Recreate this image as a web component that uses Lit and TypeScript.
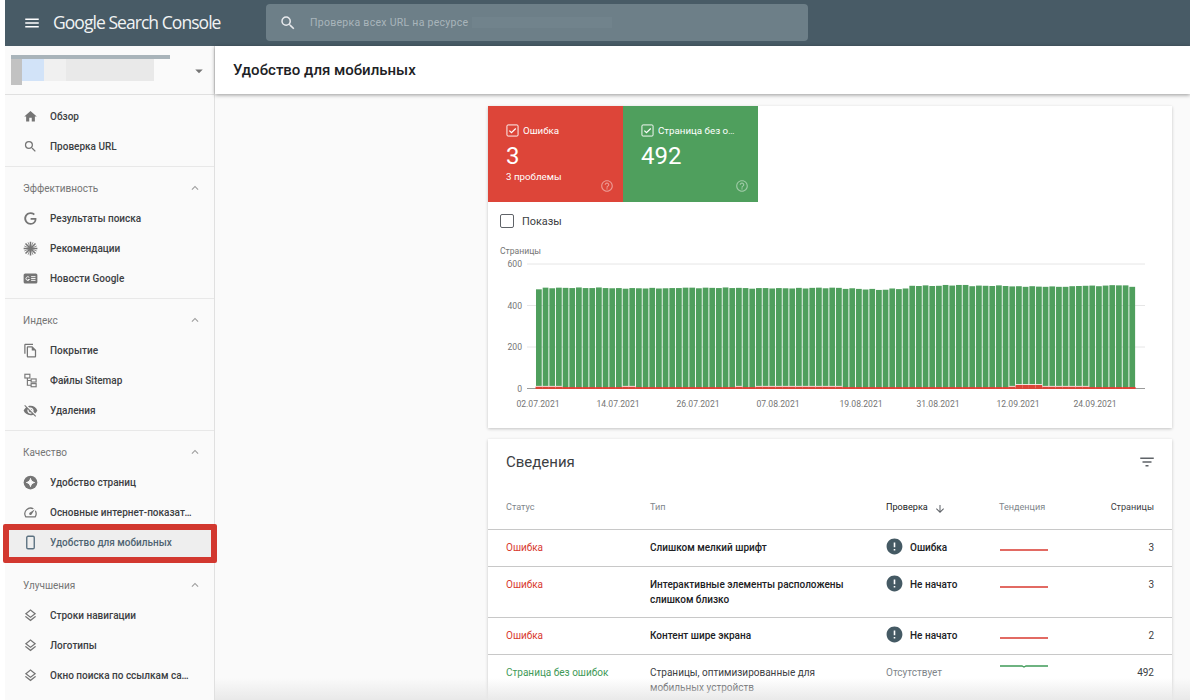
import { LitElement, html, css, svg } from "lit";
import { customElement } from "lit/decorators.js";

const P = {
  menu: "M3 18h18v-2H3v2zm0-5h18v-2H3v2zm0-7v2h18V6H3z",
  search: "M15.5 14h-.79l-.28-.27A6.471 6.471 0 0 0 16 9.5 6.5 6.5 0 1 0 9.5 16c1.61 0 3.09-.59 4.23-1.57l.27.28v.79l5 4.99L20.49 19l-4.99-5zm-6 0C7.01 14 5 11.99 5 9.5S7.01 5 9.5 5 14 7.01 14 9.5 11.99 14 9.5 14z",
  home: "M10 20v-6h4v6h5v-8h3L12 3 2 12h3v8z",
  google: "M21.35 11.1h-9.17v2.73h6.51c-.33 3.81-3.5 5.44-6.5 5.44C8.36 19.27 5 16.25 5 12c0-4.1 3.2-7.27 7.2-7.27 3.09 0 4.9 1.97 4.9 1.97L19 4.72S16.56 2 12.1 2C6.42 2 2.03 6.8 2.03 12c0 5.05 4.13 10 10.22 10 5.35 0 9.25-3.67 9.25-9.09 0-1.15-.15-1.81-.15-1.81z",
  pages: "M16 1H4c-1.1 0-2 .9-2 2v14h2V3h12V1zm-1 4H8c-1.1 0-1.99.9-1.99 2L6 21c0 1.1.89 2 1.99 2H19c1.1 0 2-.9 2-2V11l-6-6zM8 21V7h6v5h5v9H8z",
  eyeOff: "M12 7c2.76 0 5 2.24 5 5 0 .65-.13 1.26-.36 1.83l2.92 2.92c1.51-1.26 2.7-2.89 3.43-4.75-1.73-4.39-6-7.5-11-7.5-1.4 0-2.74.25-3.98.7l2.16 2.16C10.74 7.13 11.35 7 12 7zM2 4.27l2.28 2.28.46.46C3.08 8.3 1.78 10.02 1 12c1.73 4.39 6 7.5 11 7.5 1.55 0 3.03-.3 4.38-.84l.42.42L19.73 22 21 20.73 3.27 3 2 4.27zM7.53 9.8l1.55 1.55c-.05.21-.08.43-.08.65 0 1.66 1.34 3 3 3 .22 0 .44-.03.65-.08l1.55 1.55c-.67.33-1.41.53-2.2.53-2.76 0-5-2.24-5-5 0-.79.2-1.53.53-2.2zm4.31-.78l3.15 3.15.02-.16c0-1.66-1.34-3-3-3l-.17.01z",
  speed: "M20.38 8.57l-1.23 1.85a8 8 0 0 1-.22 7.58H5.07A8 8 0 0 1 15.58 6.85l1.85-1.23A10 10 0 0 0 3.35 19a2 2 0 0 0 1.72 1h13.85a2 2 0 0 0 1.74-1 10 10 0 0 0-.27-10.44zm-9.79 6.84a2 2 0 0 0 2.83 0l5.66-8.49-8.49 5.66a2 2 0 0 0 0 2.83z",
  layers: "M11.99 18.54l-7.37-5.73L3 14.07l9 7 9-7-1.63-1.27-7.38 5.74zM12 16l7.36-5.73L21 9l-9-7-9 7 1.63 1.27L12 16zm0-11.47L17.74 9 12 13.47 6.26 9 12 4.53z",
  less: "M12 8l-6 6 1.41 1.41L12 10.83l4.59 4.58L18 14z",
  filter: "M10 18h4v-2h-4v2zM3 6v2h18V6H3zm3 7h12v-2H6v2z",
  down: "M20 12l-1.41-1.41L13 16.17V4h-2v12.17l-5.58-5.59L4 12l8 8 8-8z",
  help: "M11 18h2v-2h-2v2zm1-16C6.48 2 2 6.48 2 12s4.48 10 10 10 10-4.48 10-10S17.52 2 12 2zm0 18c-4.41 0-8-3.59-8-8s3.59-8 8-8 8 3.59 8 8-3.59 8-8 8zm0-14c-2.21 0-4 1.79-4 4h2c0-1.1.9-2 2-2s2 .9 2 2c0 2-3 1.75-3 5h2c0-2.25 3-2.5 3-5 0-2.21-1.79-4-4-4z",
  error: "M12 2C6.48 2 2 6.48 2 12s4.48 10 10 10 10-4.48 10-10S17.52 2 12 2zm1 15h-2v-2h2v2zm0-4h-2V7h2v6z",
  drop: "M7 10l5 5 5-5z",
};

const ic = (d: string, cls = "ic") =>
  html`<svg class=${cls} viewBox="0 0 24 24" aria-hidden="true"><path d=${d}></path></svg>`;

const sparkIcon = html`<svg class="ic" viewBox="0 0 24 24" aria-hidden="true">
  <g stroke="currentColor" stroke-width="2.4" fill="none">
    <path d="M12 1v22M1 12h22M4 4l16 16M20 4L4 20"></path>
    <path d="M8 2l8 20M16 2L8 22M2 8l20 8M2 16l20-8" stroke-width="1.2"></path>
  </g></svg>`;
const newsIcon = html`<svg class="ic" viewBox="0 0 24 24" aria-hidden="true">
  <rect x="1" y="4" width="22" height="16" rx="2.5" fill="currentColor"></rect>
  <path d="M10 10.2a3 3 0 1 0 .4 3.4H7.6" stroke="#fafafa" stroke-width="1.5" fill="none"></path>
  <path d="M13 9h7M13 12h7M13 15h7" stroke="#fafafa" stroke-width="1.5"></path></svg>`;
const treeIcon = html`<svg class="ic" viewBox="0 0 24 24" aria-hidden="true">
  <g stroke="currentColor" stroke-width="1.8" fill="none">
    <rect x="3" y="2" width="8" height="6"></rect>
    <rect x="13" y="9.5" width="8" height="5"></rect>
    <rect x="13" y="17" width="8" height="5"></rect>
    <path d="M7 8v11.5h6M7 12h6"></path>
  </g></svg>`;
const expIcon = html`<svg class="ic" viewBox="0 0 24 24" aria-hidden="true">
  <circle cx="12" cy="12" r="11" fill="currentColor"></circle>
  <path d="M12 5.5c.6 3.6 2.9 5.9 6.5 6.5-3.6.6-5.9 2.9-6.5 6.5-.6-3.6-2.9-5.9-6.5-6.5 3.6-.6 5.9-2.9 6.5-6.5z" fill="#fafafa" stroke="#fafafa" stroke-width="1.6"></path></svg>`;
const phoneIcon = html`<svg class="ic phone" viewBox="0 0 24 24" aria-hidden="true">
  <rect x="6" y="2" width="12" height="20" rx="2" fill="none" stroke="currentColor" stroke-width="2.2"></rect></svg>`;

type Item = { icon: unknown; label: string; active?: boolean };
type Section = { title?: string; items: Item[]; extra?: boolean };

const sections: Section[] = [
  { items: [
    { icon: ic(P.home), label: "Обзор" },
    { icon: ic(P.search), label: "Проверка URL" },
  ] },
  { title: "Эффективность", items: [
    { icon: ic(P.google), label: "Результаты поиска" },
    { icon: sparkIcon, label: "Рекомендации" },
    { icon: newsIcon, label: "Новости Google" },
  ] },
  { title: "Индекс", items: [
    { icon: ic(P.pages), label: "Покрытие" },
    { icon: treeIcon, label: "Файлы Sitemap" },
    { icon: ic(P.eyeOff), label: "Удаления" },
  ] },
  { title: "Качество", items: [
    { icon: expIcon, label: "Удобство страниц" },
    { icon: ic(P.speed), label: "Основные интернет-показатели" },
    { icon: phoneIcon, label: "Удобство для мобильных", active: true },
  ] },
  { title: "Улучшения", extra: true, items: [
    { icon: ic(P.layers), label: "Строки навигации" },
    { icon: ic(P.layers), label: "Логотипы" },
    { icon: ic(P.layers), label: "Окно поиска по ссылкам сайта" },
  ] },
];

const rows = [
  { status: "Ошибка", ok: false, type: "Слишком мелкий шрифт", check: "Ошибка", count: "3" },
  { status: "Ошибка", ok: false, type: "Интерактивные элементы расположены слишком близко", check: "Не начато", count: "3", tall: true },
  { status: "Ошибка", ok: false, type: "Контент шире экрана", check: "Не начато", count: "2" },
  { status: "Страница без ошибок", ok: true, type: "Страницы, оптимизированные для мобильных устройств", check: "Отсутствует", count: "492", tall: true },
];

function totals(): number[] {
  const seg: [number, number][] = [
    [1, 478], [11, 485], [21, 483], [31, 485], [41, 483], [46, 485], [49, 481], [51, 478],
    [53, 476], [56, 481], [61, 495], [65, 498], [71, 495], [75, 492], [81, 491], [86, 495], [88, 498], [89, 495], [90, 491],
  ];
  const out: number[] = [];
  let s = 0;
  for (let i = 0; i < 90; i++) {
    while (i >= seg[s][0]) s++;
    out.push(seg[s][1] + Math.round(Math.sin(i * 2.3) * 1.6));
  }
  return out;
}

const raised = new Set([0, 1, 2, 3, 13, 14, 30, 33, 34, 35, 36, 37, 38, 39, 40, 41, 42, 43, 44, 45, 71, 76, 77, 78, 79, 80, 81, 82]);
const high = new Set([72, 73, 74, 75]);

const chart = () => {
  const x0 = 536, step = 6.667, base = 388.5, k = 124.5 / 600;
  const grid = [600, 400, 200];
  const dates = ["02.07.2021", "14.07.2021", "26.07.2021", "07.08.2021", "19.08.2021", "31.08.2021", "12.09.2021", "24.09.2021"];
  const dateX = [538, 618, 698, 778, 861, 938, 1018, 1095];
  return svg`<svg class="chart" viewBox="488 244 684 172" aria-label="Страницы">
    <text x="500" y="254" class="axis">Страницы</text>
    ${grid.map((v) => svg`
      <line x1="527" x2="1145" y1=${base - v * k} y2=${base - v * k} stroke="#e6e6e6" stroke-width="1"></line>
      <text x="522" y=${base - v * k + 3.2} class="axis" text-anchor="end">${v}</text>`)}
    <text x="522" y=${base + 3} class="axis" text-anchor="end">0</text>
    <line x1="527" x2="1145" y1=${base} y2=${base} stroke="#9a9a9a" stroke-width="1"></line>
    ${totals().map((t, i) => {
      const x = x0 + i * step;
      const red = high.has(i) ? 3.6 : raised.has(i) ? 1.8 : 1.5;
      const gap = high.has(i) || raised.has(i) ? 0.8 : 0;
      const top = base - t * k;
      return svg`
        <rect x=${x} y=${top} width="5.75" height=${base - red - gap - top} fill="#4f9f5d"></rect>
        <rect x=${x - 0.46} y=${base - red} width="6.67" height=${red + 0.5} fill="#dc4437"></rect>`;
    })}
    ${dates.map((d, i) => svg`<text x=${dateX[i]} y="407" class="axis" text-anchor="middle">${d}</text>`)}
  </svg>`;
};

const checkIcon = html`<svg class="tick" viewBox="0 0 14 14" aria-hidden="true">
  <rect x="1" y="1" width="12" height="12" rx="1.2" fill="none" stroke="#fff" stroke-width="1"></rect>
  <path d="M3.6 7.2l2.3 2.2 4.6-4.6" fill="none" stroke="#fff" stroke-width="1.3"></path></svg>`;

@customElement("app-root")
export class AppRoot extends LitElement {
  static styles = css`
    :host {
      display: block; position: relative; width: 1190px; height: 700px; overflow: hidden;
      background: #fff; font-family: Roboto, "Liberation Sans", sans-serif; color: #202124;
    }
    svg.ic { display: block; width: 15px; height: 15px; fill: currentColor; flex: none; }
    .shell { margin-left: 5px; height: 700px; display: flex; flex-direction: column; }
    header { height: 46px; flex: none; background: #485b66; display: flex; align-items: center; color: #fff; }
    .burger { padding: 0 0 0 18px; width: 30px; }
    .burger svg.ic { width: 18px; height: 18px; }
    .logo { font-family: "Open Sans", sans-serif; font-size: 17.5px; letter-spacing: -0.95px; width: 213px; color: #f1f3f4; white-space: nowrap; padding-bottom: 2px; }
    .searchbox { width: 542px; height: 37px; margin-top: -1px; background: #6d7f88; border-radius: 4px; display: flex; align-items: center; }
    .searchbox svg.ic { width: 18px; height: 18px; margin-left: 13px; color: #e8eaed; }
    .searchbox .ph { margin-left: 13px; font-size: 10.5px; color: #a9b5bb; letter-spacing: 0.28px; }
    .searchbox .blur { margin-left: 4px; width: 140px; height: 11px; background: #71838c; }
    .body { flex: 1; min-height: 0; display: flex; }
    aside { width: 209px; flex: none; background: #fafafa; border-right: 1px solid #e0e0e0; overflow: hidden; }
    .prop { height: 48px; border-bottom: 1px solid #e0e0e0; display: flex; align-items: center; justify-content: space-between; padding: 0 6px; box-sizing: content-box; }
    .prop .mask { display: block; width: 160px; height: 32px; margin-top: 2px; }
    .prop svg.ic { width: 18px; height: 18px; color: #757575; margin-top: 2px; }
    .sec { padding: 6px 0 5px; border-bottom: 1px solid #e8e8e8; }
    .sec.extra { padding-top: 7px; border-bottom: 0; }
    .sec.tail { padding: 0; border: 0; }
    .sec-h { height: 30px; display: flex; align-items: center; justify-content: space-between; padding: 0 12px 0 18px; font-size: 10px; color: #757575; }
    .sec-h svg.ic { color: #9e9e9e; width: 14px; height: 14px; }
    .item { height: 30px; display: flex; align-items: center; padding-left: 18px; color: #757575; font-size: 10px; font-weight: 500; }
    .item .lbl { margin-left: 12px; width: 143px; color: #3c4043; white-space: nowrap; overflow: hidden; text-overflow: ellipsis; line-height: 15px; }
    .item.active { background: #eeeeee; color: #5b7180; }
    .item.active .lbl { color: #4f6472; }
    .redbox { position: absolute; left: 3px; top: 524px; width: 214px; height: 39px; box-sizing: border-box; border: 6px solid #d2382f; border-radius: 2px; }
    main { flex: 1; min-width: 0; background: #fafafa; display: flex; flex-direction: column; }
    .titlebar { height: 48px; flex: none; background: #fff; box-shadow: 0 1px 4px rgba(0,0,0,.4); padding-left: 18px; display: flex; align-items: center; font-size: 15px; font-weight: 500; color: #202124; position: relative; }
    .content { flex: 1; min-height: 0; overflow: hidden; padding: 12px 18px 0 273px; display: flex; flex-direction: column; gap: 11px; }
    .card { background: #fff; box-shadow: 0 1px 3px rgba(0,0,0,.22); flex: none; }
    .tiles { display: flex; }
    .tile { width: 135px; height: 96px; box-sizing: border-box; padding: 18px 23px 0 18px; color: #fff; position: relative; }
    .tile.err { background: #dd4539; }
    .tile.ok { background: #4f9f5d; }
    .tile .h { display: flex; align-items: center; gap: 4px; font-size: 9.75px; line-height: 12px; }
    .tile .h span { white-space: nowrap; overflow: hidden; text-overflow: ellipsis; }
    .tick { width: 13px; height: 13px; flex: none; }
    .tile .n { font-size: 24px; line-height: 28px; margin-top: 5px; }
    .tile .s { font-size: 9.75px; line-height: 12px; margin-top: 1px; }
    .tile svg.help { position: absolute; right: 9px; bottom: 9px; width: 14px; height: 14px; fill: rgba(255,255,255,.45); }
    .imp { display: flex; align-items: center; gap: 8px; padding: 12px 0 16px 12px; height: 14px; font-size: 10.9px; color: #3c4043; }
    .box { width: 14px; height: 14px; box-sizing: border-box; border: 1px solid #5f6368; border-radius: 2px; }
    .chart { display: block; width: 684px; height: 172px; margin-bottom: 12px; }
    .axis { font-size: 8.6px; fill: #757575; font-family: Roboto, sans-serif; }
    .det-h { height: 51px; box-sizing: border-box; padding: 15px 16px 0 18px; display: flex; justify-content: space-between; align-items: flex-start; font-size: 15px; line-height: 16px; color: #3c4043; }
    .det-h svg.ic { width: 18px; height: 18px; color: #5f6368; margin-top: -1px; }
    .row { display: grid; grid-template-columns: 144px 236px 113px 90px 1fr; padding: 0 18px; border-bottom: 1px solid #c8c8c8; box-sizing: content-box; font-size: 10px; line-height: 15px; height: 26px; padding-top: 10px; }
    .row.tall { height: 40px; }
    .row.head { height: 29px; font-size: 9.1px; padding-top: 10px; color: #80868b; }
    .row .th-sort { color: #202124; display: flex; align-items: flex-start; gap: 6px; }
    .row .th-sort svg.ic { width: 12px; height: 12px; margin-top: 3px; color: #5f6368; }
    .row:last-child { border-bottom: 0; }
    .st-err { color: #d8392f; }
    .st-ok { color: #3f9a58; }
    .ty { font-weight: 500; color: #202124; padding-right: 20px; }
    .ty.light { font-weight: 400; color: #3c4043; }
    .chk { display: flex; align-items: flex-start; gap: 6px; font-weight: 500; color: #202124; }
    .chk svg.ic { width: 19px; height: 19px; margin: -3px 0 0 -1px; color: #455a64; }
    .chk.none { font-weight: 400; color: #80868b; }
    .trend { display: block; width: 48px; height: 8px; margin-top: 6px; margin-left: 1px; }
    .trend.up { margin-top: -3px; }
    .cnt { text-align: right; color: #3c4043; }
    .fade { position: absolute; left: 215px; right: 0; bottom: 0; height: 22px; background: linear-gradient(rgba(232,232,232,0), rgba(232,232,232,.95)); pointer-events: none; }
  `;

  render() {
    return html`
      <div class="shell">
        <header>
          <div class="burger">${ic(P.menu)}</div>
          <div class="logo">Google Search Console</div>
          <div class="searchbox">
            ${ic(P.search)}
            <span class="ph">Проверка всех URL на ресурсе</span>
            <span class="blur"></span>
          </div>
        </header>
        <div class="body">
          <aside>
            <div class="prop">
              <svg class="mask" viewBox="0 0 160 32" aria-hidden="true">
                <rect x="0" y="0" width="159" height="4" fill="#a9b4ba"></rect>
                <rect x="0" y="4" width="11" height="26" fill="#c2c2c2"></rect>
                <rect x="11" y="4" width="22" height="22" fill="#d2e3f8"></rect>
                <rect x="33" y="4" width="22" height="22" fill="#f0f0f0"></rect>
                <rect x="55" y="4" width="88" height="22" fill="#e9e9e9"></rect>
              </svg>
              ${ic(P.drop)}
            </div>
            ${sections.map((s) => html`
              <div class="sec ${s.extra ? "extra" : ""}">
                ${s.title ? html`<div class="sec-h"><span>${s.title}</span>${ic(P.less)}</div>` : ""}
                ${s.items.map((it) => html`
                  <div class="item ${it.active ? "active" : ""}">${it.icon}<span class="lbl">${it.label}</span></div>`)}
              </div>`)}
            <div class="sec tail"><div class="item">${ic(P.layers)}</div></div>
          </aside>
          <main>
            <div class="titlebar">Удобство для мобильных</div>
            <div class="content">
              <section class="card">
                <div class="tiles">
                  <div class="tile err">
                    <div class="h">${checkIcon}<span>Ошибка</span></div>
                    <div class="n">3</div>
                    <div class="s">3 проблемы</div>
                    ${ic(P.help, "help")}
                  </div>
                  <div class="tile ok">
                    <div class="h">${checkIcon}<span>Страница без ошибок</span></div>
                    <div class="n">492</div>
                    ${ic(P.help, "help")}
                  </div>
                </div>
                <div class="imp"><span class="box"></span><span>Показы</span></div>
                ${chart()}
              </section>
              <section class="card">
                <div class="det-h"><span>Сведения</span>${ic(P.filter)}</div>
                <div class="row head">
                  <div>Статус</div><div>Тип</div>
                  <div class="th-sort">Проверка ${ic(P.down)}</div>
                  <div>Тенденция</div><div class="cnt">Страницы</div>
                </div>
                ${rows.map((r) => html`
                  <div class="row ${r.tall ? "tall" : ""}">
                    <div class=${r.ok ? "st-ok" : "st-err"}>${r.status}</div>
                    <div class="ty ${r.ok ? "light" : ""}">${r.type}</div>
                    <div class="chk ${r.ok ? "none" : ""}">${r.ok ? "" : ic(P.error)}<span>${r.check}</span></div>
                    <div>
                      <svg class="trend ${r.ok ? "up" : ""}" viewBox="0 0 48 8" aria-hidden="true">
                        <path d=${r.ok ? "M0 4H22L24 5 26 4H48" : "M0 4H48"} fill="none" stroke=${r.ok ? "#3f9a58" : "#d8392f"} stroke-width="1.3"></path>
                      </svg>
                    </div>
                    <div class="cnt">${r.count}</div>
                  </div>`)}
              </section>
            </div>
          </main>
        </div>
      </div>
      <div class="redbox"></div>
      <div class="fade"></div>
    `;
  }
}
